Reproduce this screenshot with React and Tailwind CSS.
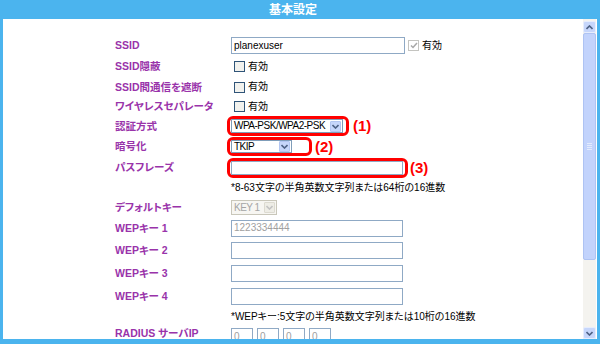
import React from "react";

const FONT = { fontFamily: '"Liberation Sans", "Noto Sans CJK JP", sans-serif' };

function Chevron({ color = "#4d6185", up = false }) {
  return (
    <svg width="7" height="5" viewBox="0 0 7 5">
      <path d={up ? "M0.5 4 L3.5 1 L6.5 4" : "M0.5 1 L3.5 4 L6.5 1"} fill="none" stroke={color} strokeWidth="1.6" />
    </svg>
  );
}

function Select({ w, h, text, disabled }) {
  return (
    <div
      className={`flex items-center border ${disabled ? "border-[#c9c7ba] bg-[#f7f6f2] text-[#a5a5a5]" : "border-[#7f9db9] bg-white text-black"}`}
      style={{ width: w, height: h }}
    >
      <span className="flex-1 pl-[2px] text-[10px] leading-none tracking-[-0.5px] whitespace-nowrap overflow-hidden">{text}</span>
      <div
        className={`w-[11px] h-[11px] mr-[1px] shrink-0 rounded-[1px] flex items-center justify-center border ${disabled ? "bg-[#eeede6] border-[#dcdad0]" : "bg-[#c6d6fb] border-[#b3c6f2]"}`}
      >
        <Chevron color={disabled ? "#c3c3c3" : "#4d6185"} />
      </div>
    </div>
  );
}

function Input({ w = 172, h = 17, text, grey }) {
  return (
    <div
      className={`flex items-center border border-[#8fa9c5] bg-white text-[10px] leading-none pl-[2px] ${grey ? "text-[#a0a0a0]" : "text-black"}`}
      style={{ width: w, height: h }}
    >
      {text}
    </div>
  );
}

function Check({ disabled, checked }) {
  return (
    <div
      className={`w-[11px] h-[11px] border flex items-center justify-center ${disabled ? "border-[#c4c4c0] bg-white" : "border-[#2f5478] bg-[#f2f2ee]"}`}
    >
      {checked && (
        <svg width="8" height="7" viewBox="0 0 8 7">
          <path d="M1 3.5 L3 5.5 L7 1" fill="none" stroke="#a8a8a8" strokeWidth="1.5" />
        </svg>
      )}
    </div>
  );
}

function CheckLabel({ disabled, checked }) {
  return (
    <div className="flex items-center gap-[3px]">
      <Check disabled={disabled} checked={checked} />
      <span className="text-[10px] text-black leading-none">有効</span>
    </div>
  );
}

function Row({ h, label, children }) {
  return (
    <div className="flex items-center shrink-0" style={{ height: h }}>
      <div className="w-[116px] shrink-0 text-[10.5px] font-bold text-[#9933aa] leading-none whitespace-nowrap [font-feature-settings:'palt']">
        {label}
      </div>
      <div className="flex items-center">{children}</div>
    </div>
  );
}

function Mark({ children }) {
  return <span className="text-[15px] font-bold text-[#ff0000] leading-none">{children}</span>;
}

export default function App() {
  return (
    <div className="w-[600px] h-[344px] bg-[#4bb4ee] flex flex-col overflow-hidden" style={FONT}>
      <div className="h-[19px] shrink-0 flex items-center justify-center pr-[14px] text-white text-[12px] font-bold leading-none">
        基本設定
      </div>
      <div className="ml-[3px] w-[594px] h-[320px] shrink-0 bg-white flex overflow-hidden">
        <div className="w-[580px] shrink-0 pl-[112px] pt-[16px] flex flex-col [font-feature-settings:'palt']">
          <Row h={21} label="SSID">
            <Input w={174} text="planexuser" />
            <div className="ml-[3px]">
              <CheckLabel disabled checked />
            </div>
          </Row>
          <Row h={21} label="SSID隠蔽">
            <div className="ml-[3px]"><CheckLabel /></div>
          </Row>
          <Row h={20} label="SSID間通信を遮断">
            <div className="ml-[3px]"><CheckLabel /></div>
          </Row>
          <Row h={19} label="ワイヤレスセパレータ">
            <div className="ml-[3px]"><CheckLabel /></div>
          </Row>
          <Row h={20} label="認証方式">
            <div className="-ml-[4px] h-[20px] border-[3px] border-[#ff0000] rounded-[6px] flex items-center pl-[1px] pr-[3px]">
              <Select w={112} h={14} text="WPA-PSK/WPA2-PSK" />
            </div>
            <div className="ml-[4px]"><Mark>(1)</Mark></div>
          </Row>
          <Row h={21} label="暗号化">
            <div className="-ml-[4px] h-[19px] border-[3px] border-[#ff0000] rounded-[6px] flex items-center pl-[1px] pr-[17px]">
              <Select w={61} h={13} text="TKIP" />
            </div>
            <div className="ml-[3px]"><Mark>(2)</Mark></div>
          </Row>
          <Row h={21} label="パスフレーズ">
            <div className="-ml-[4px] h-[20px] border-[3px] border-[#ff0000] rounded-[6px] flex items-center pl-[1px] pr-[2px]">
              <Input w={172} h={14} text="" />
            </div>
            <div className="ml-[2px]"><Mark>(3)</Mark></div>
          </Row>
          <Row h={20} label="">
            <span className="text-[10px] text-black leading-none whitespace-nowrap">*8-63文字の半角英数文字列または64桁の16進数</span>
          </Row>
          <Row h={19} label="デフォルトキー">
            <Select w={46} h={15} text="KEY 1" disabled />
          </Row>
          <Row h={22} label="WEPキー 1">
            <Input text="1223334444" grey />
          </Row>
          <Row h={23} label="WEPキー 2">
            <Input text="" />
          </Row>
          <Row h={23} label="WEPキー 3">
            <Input text="" />
          </Row>
          <Row h={23} label="WEPキー 4">
            <Input text="" />
          </Row>
          <Row h={18} label="">
            <span className="text-[10px] text-black leading-none whitespace-nowrap">*WEPキー:5文字の半角英数文字列または10桁の16進数</span>
          </Row>
          <div className="flex items-start h-[30px] shrink-0 pt-[2px]">
            <div className="w-[116px] shrink-0 -mt-[1px] text-[10.5px] font-bold text-[#9933aa] leading-[13px] whitespace-nowrap">
              RADIUS サーバIP
            </div>
            <div className="flex items-end">
              {[0, 1, 2, 3].map((i) => (
                <React.Fragment key={i}>
                  {i > 0 && <span className="w-[4px] text-[10px] leading-none text-black text-center">.</span>}
                  <Input w={22} h={17} text="0" grey />
                </React.Fragment>
              ))}
            </div>
          </div>
        </div>
        <div className="w-[13px] shrink-0 flex flex-col pt-[2px] bg-[#f4f3ef]">
          <div className="h-[12px] shrink-0 bg-[#c6d6fb] border border-[#e6edfd] rounded-[2px] flex items-center justify-center">
            <Chevron up />
          </div>
          <div className="h-[227px] shrink-0 bg-[#c2d3fc] border border-[#aec3f3] rounded-[2px] flex items-center justify-center">
            <div className="flex flex-col gap-[1px]">
              <div className="w-[5px] h-[1px] bg-[#e3ebfd]" />
              <div className="w-[5px] h-[1px] bg-[#e3ebfd]" />
              <div className="w-[5px] h-[1px] bg-[#e3ebfd]" />
              <div className="w-[5px] h-[1px] bg-[#e3ebfd]" />
            </div>
          </div>
          <div className="flex-1" />
          <div className="h-[12px] shrink-0 bg-[#c6d6fb] border border-[#e6edfd] rounded-[2px] flex items-center justify-center">
            <Chevron />
          </div>
        </div>
      </div>
    </div>
  );
}
